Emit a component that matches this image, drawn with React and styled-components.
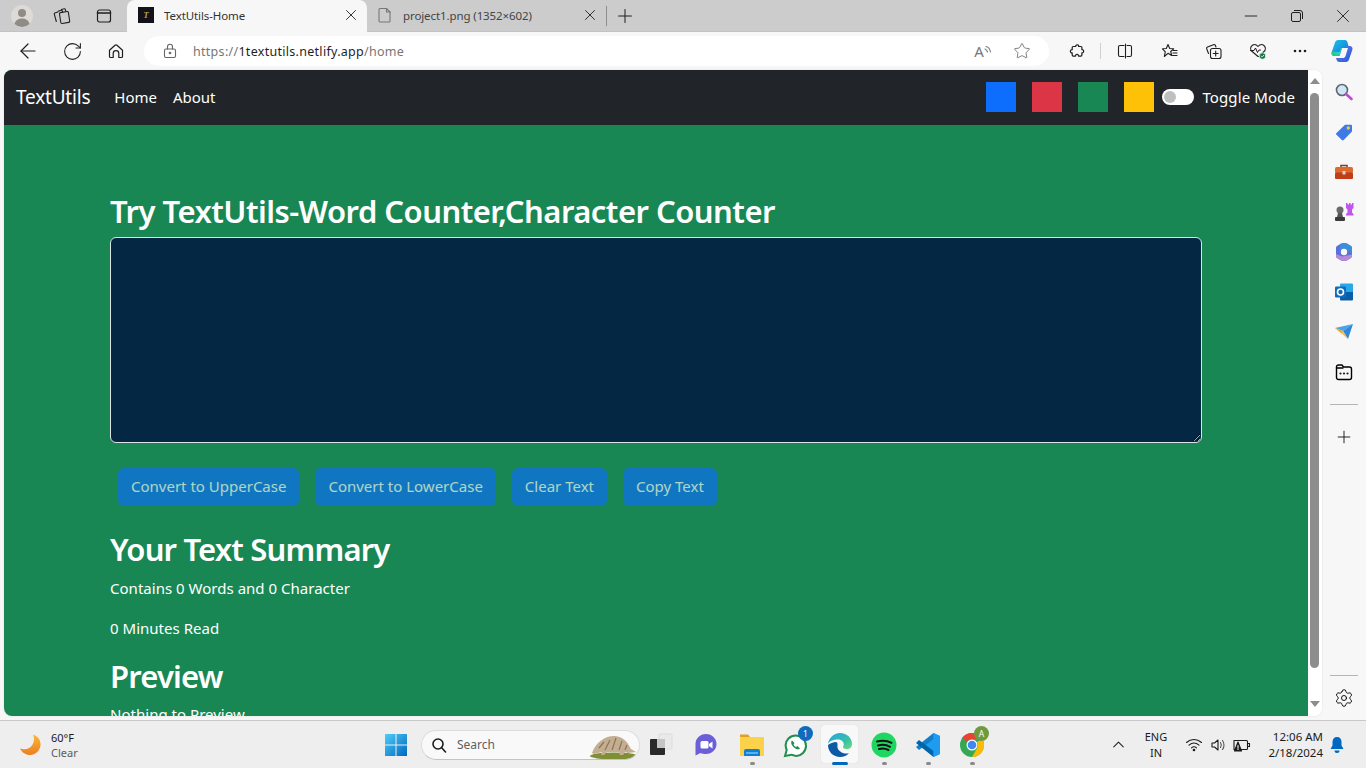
import React from "react";
import styled, { createGlobalStyle } from "styled-components";
import { ArrowLeft, RotateCw, Star, X, Plus, Minus, Settings, ChevronUp } from "lucide-react";

const uiFont = `"Noto Sans", "Open Sans", sans-serif`;

const Global = createGlobalStyle`
  html, body { margin: 0; padding: 0; height: 768px; overflow: hidden; background: #f7f7f7; }
  * { box-sizing: border-box; }
  #root { width: 1366px; height: 768px; overflow: hidden; font-family: ${uiFont}; }
`;

const Screen = styled.div`display: flex; flex-direction: column; width: 1366px; height: 768px; background: #f7f7f7;`;
const TitleBar = styled.div`display: flex; align-items: stretch; height: 32px; background: #cccccc; flex: none; box-shadow: inset 0 -1px 0 #c2c2c2;`;
const Slot = styled.div`
  display: flex; align-items: center; justify-content: center; flex: none; position: relative;
  width: ${p => p.$w}px; color: ${p => p.$c || "#1f1f1f"};
`;
const Tab = styled.div`
  display: flex; align-items: center; flex: none; width: ${p => p.$w}px; padding: 0 7px 2px ${p => p.$active ? 11 : 10}px;
  margin-left: ${p => p.$ml || 0}px;
  background: ${p => p.$active ? "#f7f7f7" : "transparent"};
  border-radius: 8px 8px 0 0;
  color: #333; font-size: 11.5px; gap: ${p => p.$active ? 10 : 11}px;
`;
const TabTitle = styled.span`flex: 1; white-space: nowrap; overflow: hidden; letter-spacing: -.1px; color: ${p => p.$c || "#333"};`;
const Favicon = styled.span`
  width: 16px; height: 16px; background: #12121a; color: #b99a4a; font: italic bold 9px/16px "Liberation Serif", serif;
  text-align: center; flex: none;
`;
const TabDivider = styled.div`width: 1px; height: 20px; background: #8e8e8e; align-self: center; flex: none;`;
const Spacer = styled.div`flex: 1;`;

const ToolBar = styled.div`display: flex; align-items: center; height: 38px; flex: none; padding-left: 6px;`;
const UrlBar = styled.div`
  display: flex; align-items: center; width: 905px; height: 30px; margin: 0 6px; padding-left: 19px;
  background: #fff; border-radius: 15px; flex: none;
`;
const UrlText = styled.div`font-size: 12.5px; letter-spacing: .29px; color: #767676; margin-left: 16px; flex: 1; white-space: nowrap;`;
const UrlHost = styled.span`color: #1f1f1f;`;
const ToolDivider = styled.div`width: 1px; height: 16px; background: #cfcfcf; margin: 0 1px; flex: none;`;
const ReadA = styled.span`font: 15px "Noto Sans", sans-serif; color: #777; line-height: 1;`;

const MainRow = styled.div`display: flex; height: 650px; flex: none;`;
const PageFrame = styled.div`
  display: flex; width: 1318px; height: 646px; margin-left: 4px; flex: none; overflow: hidden;
  border-radius: 8px; background: #fff; box-shadow: 0 0 2px rgba(0,0,0,.12);
`;
const Viewport = styled.div`width: 1304px; height: 646px; overflow: hidden; background: #198754; color: #fff; flex: none;`;

const ScrollBar = styled.div`
  width: 14px; flex: none; background: #fff; display: flex; flex-direction: column; align-items: flex-start; padding: 8px 0 0 2px;
`;
const ArrowUp = styled.div`width: 0; height: 0; margin-left: 0; border-left: 5px solid transparent; border-right: 5px solid transparent; border-bottom: 6px solid #8d8d8d;`;
const ArrowDown = styled.div`width: 0; height: 0; border-left: 5px solid transparent; border-right: 5px solid transparent; border-top: 6px solid #8d8d8d; margin-top: 33px;`;
const Thumb = styled.div`width: 9px; height: 575px; margin-top: 9px; background: #8d8d8d; border-radius: 5px;`;

const Nav = styled.nav`display: flex; align-items: center; height: 55px; background: #212529; padding: 0 13px 1px 12px;`;
const Brand = styled.span`font-size: 19px; letter-spacing: -.2px; margin-right: 24px;`;
const NavLink = styled.span`font-size: 15px; margin-right: 16px; letter-spacing: -.02px; padding-bottom: 1px;`;
const Swatch = styled.span`width: 30px; height: 30px; background: ${p => p.$c}; margin-right: ${p => p.$mr}px; flex: none;`;
const Toggle = styled.span`
  width: 32px; height: 16px; border-radius: 8px; background: #fff; margin-right: 8px; display: flex; align-items: center; padding-left: 2px; flex: none;
`;
const Knob = styled.span`width: 12px; height: 12px; border-radius: 50%; background: #bfbfbf;`;
const ToggleLabel = styled.span`font-size: 15px; letter-spacing: .1px; padding-bottom: 1px;`;

const Content = styled.main`padding: 66px 0 0 106px;`;
const H1 = styled.h1`margin: 0 0 6px; font-size: 31px; font-weight: 600; line-height: 40px; letter-spacing: -.53px;`;
const TextArea = styled.textarea`
  display: block; width: 1092px; height: 206px; background: #042743; border: 1px solid #dee2e6; border-radius: 6px; outline: none; color: #fff;
`;
const Buttons = styled.div`display: flex; gap: 16px; margin: 25px 0 0 8px;`;
const Btn = styled.button`
  height: 38px; padding: 0 12px 2px; border: 1px solid #0d6efd; border-radius: 6px; background: #0d6efd; color: #fff; opacity: .65;
  font: 15px ${uiFont}; letter-spacing: 0; white-space: nowrap;
`;
const H2 = styled.h2`margin: ${p => p.$mt}px 0 0; font-size: 31px; font-weight: 600; line-height: 40px; letter-spacing: -.82px;`;
const Para = styled.p`margin: ${p => p.$mt}px 0 0; font-size: 15px; line-height: 24px; letter-spacing: .02px;`;

const SideBar = styled.aside`width: 44px; height: 650px; display: flex; flex-direction: column; align-items: center; flex: none; padding: 2px 0;`;
const SideIcon = styled.div`width: 44px; height: 40px; display: flex; align-items: center; justify-content: center; flex: none;`;
const SideRule = styled.div`width: 28px; height: 1px; background: #b5b5b5; flex: none; margin: ${p => p.$m};`;

const TaskBar = styled.footer`display: flex; align-items: center; height: 48px; flex: none; background: #eeeeee; border-top: 1px solid #c9c9c9; padding-left: 18px;`;
const Weather = styled.div`display: flex; align-items: center; width: 366px; flex: none; gap: 9px;`;
const WeatherText = styled.div`font-size: 11px; line-height: 15px; color: #1a1a1a;`;
const Muted = styled.div`color: #5c5c5c;`;
const SearchPill = styled.div`
  display: flex; align-items: center; width: 219px; height: 30px; margin-left: 13px; border-radius: 15px; background: #f9f9f9;
  border: 1px solid #dcdcdc; border-bottom-color: #c4c4c4; padding-left: 9px; gap: 10px; flex: none; position: relative; overflow: hidden;
`;
const SearchText = styled.span`font-size: 12px; color: #5d5d5d; flex: 1;`;
const ActiveBg = styled.div`
  position: absolute; left: 3px; top: 4px; width: 37px; height: 38px; background: #f8f8f8; border-radius: 4px; box-shadow: 0 0 1px rgba(0,0,0,.15);
`;
const Dot = styled.span`position: absolute; left: 50%; bottom: 3px; width: ${p => p.$wide ? 16 : 5}px; height: 3px; margin-left: ${p => p.$wide ? -8 : -2}px; border-radius: 2px; background: ${p => p.$wide ? "#0067c0" : "#8a8a8a"};`;
const Badge = styled.span`
  position: absolute; top: 5px; right: ${p => p.$r}px; width: 15px; height: 15px; border-radius: 50%; background: ${p => p.$c}; color: #fff;
  font-size: 8.5px; line-height: 15px; text-align: center;
`;
const TaskSlot = styled(Slot)`height: 47px;`;
const TrayText = styled.div`font-size: 11px; line-height: 16px; text-align: center; color: #1a1a1a; width: 40px; flex: none; margin: 0 3px 0 6px;`;
const Clock = styled.div`font-size: 11.5px; line-height: 16px; text-align: right; color: #1a1a1a; width: 62px; flex: none; margin-left: 6px; white-space: nowrap;`;
const Tray = styled.div`display: flex; align-items: center; margin-left: auto; padding-right: 15px;`;

const S = ({ w = 16, h = 16, vb, children, ...r }) => <svg width={w} height={h} viewBox={vb || `0 0 ${w} ${h}`} fill="none" stroke="currentColor" strokeWidth="1.1" strokeLinecap="round" strokeLinejoin="round" {...r}>{children}</svg>;

const Avatar = () => <S w={22} h={22}><circle cx="11" cy="11" r="11" fill="#dedbd6" stroke="none"/><circle cx="11" cy="8" r="4" fill="#8f8b86" stroke="none"/><path d="M3.500 19c1-4 4-5.500 7.500-5.500s6.500 1.500 7.500 5.500a11 11 0 0 1-15 0z" fill="#8f8b86" stroke="none"/></S>;
const CollectionsIcon = () => <S w={18} h={18}><path d="M8.500 2.500 11 1.800c.6-.2 1 0 1.200.5l.5 1.400M5.200 4.200 8 3.300c.6-.2 1 0 1.200.5l.4 1.200M3.300 14.500 1.300 7.200c-.2-.6 0-1 .5-1.200L4.700 5"/><path d="M6.500 7c-.1-.8.300-1.300 1-1.400l6.500-1.100c.8-.1 1.300.3 1.400 1l1.300 8.500c.1.8-.3 1.300-1 1.400l-6.500 1.100c-.8.1-1.300-.3-1.400-1z"/></S>;
const VerticalTabs = () => <S w={16} h={16}><rect x="1.500" y="2" width="13" height="12" rx="2" strokeWidth="1.200"/><path d="M1.500 5h13" strokeWidth="1.600"/></S>;
const FileIcon = () => <S w={14} h={16} stroke="#777"><path d="M2 1.500h6.500l3.500 3.500v9a1 1 0 0 1-1 1H2a1 1 0 0 1-1-1V2.500a1 1 0 0 1 1-1z"/><path d="M8.500 1.500V5H12"/></S>;
const HomeGlyph = () => <S w={16} h={16} strokeWidth="1.200"><path d="M1.500 7.300 7 2.200c.6-.5 1.400-.5 2 0l5.500 5.100v6.200c0 .6-.4 1-1 1h-2.700V10.500a2.800 2.800 0 0 0-5.600 0v4H2.500c-.6 0-1-.4-1-1z"/></S>;
const LockIcon = () => <S w={14} h={16} stroke="#666"><rect x="1.500" y="6" width="11" height="8.500" rx="1.500"/><path d="M4.500 6V3.800a2.500 2.500 0 0 1 5 0V6"/><circle cx="7" cy="10" r=".8" fill="#666"/></S>;
const Arcs = () => <S w={8} h={12} stroke="#777"><path d="M1 4c1.500 .5 2 1.500 2.500 3M2 1.500c2.500 .5 4 3 4.500 5.500"/></S>;
const PuzzleIcon = () => <S w={16} h={16} strokeWidth="1.200"><path d="M5.500 3.500h1.200c-.3-2 3-2.500 3-.2 0 .1 0 .2-.1.200h2.400c.5 0 .9.400.9.900v2.200c2-.3 2.600 3.200.1 3.200l-.1 0v2.300c0 .6-.4 1-1 1H9.500c.3-2-3-2.500-3-.2 0 .1 0 .2 0 .2H4.200c-.5 0-1-.5-1-1v-2.200c-2.200.3-2.600-3.300 0-3.200V4.500c0-.6.500-1 1-1z"/></S>;
const SplitIcon = () => <S w={16} h={16}><path d="M7 2.500H3a1.500 1.500 0 0 0-1.500 1.500v8A1.500 1.500 0 0 0 3 13.500h4M10 2.500h3A1.500 1.500 0 0 1 14.500 4v8a1.500 1.500 0 0 1-1.500 1.500h-3M8.500 1v14"/></S>;
const FavIcon = () => <S w={18} h={16}><path d="M7 1.500 8.700 5.500l4 .3-3 2.700 1 4-3.700-2.200-3.700 3.200 1-4.700L1.500 5.800l3.800-.3z"/><path d="M12 7.500h4M12 10h4M11.500 12.500h4.500" strokeWidth="1.200"/></S>;
const CollectPlus = () => <S w={18} h={18}><path d="M3.500 11.500 1.700 6.800c-.3-.8 0-1.500.8-1.800l6-2.300c.8-.3 1.500 0 1.800.6l.7 1.700"/><rect x="5.500" y="6.500" width="10.500" height="10" rx="2" fill="#f7f7f7"/><path d="M10.700 9v5M8.200 11.500h5"/></S>;
const HealthIcon = () => <S w={18} h={18}><path d="M2 8.500C.5 5.500 3 2.500 5.500 2.500c1.500 0 2.500.8 3.500 2 1-1.200 2-2 3.500-2 2.500 0 5 3 3.500 6L10 14.500H9z"/><path d="M1.500 8.500h3.500l1.500-2.500 2 4.500 1.500-2.500h1.500" strokeWidth="1"/><circle cx="13.500" cy="14" r="3.300" fill="#107c41" stroke="#f7f7f7" strokeWidth=".8"/><path d="M12.200 14l1 1 1.500-1.700" stroke="#fff" strokeWidth=".8"/></S>;
const DotsIcon = () => <S w={14} h={4}><g fill="#1f1f1f" stroke="none"><circle cx="2" cy="2" r="1.300"/><circle cx="7" cy="2" r="1.300"/><circle cx="12" cy="2" r="1.300"/></g></S>;
const Copilot = () => (
  <svg width="24" height="24" viewBox="0 0 24 24">
    <defs>
      <linearGradient id="cpa" x1="0" y1="0" x2="1" y2="1"><stop offset="0" stopColor="#1cc7e8"/><stop offset="1" stopColor="#0f6fdc"/></linearGradient>
      <linearGradient id="cpb" x1="0" y1="1" x2="1" y2="0"><stop offset="0" stopColor="#22c55e"/><stop offset="1" stopColor="#35d0e0"/></linearGradient>
      <linearGradient id="cpc" x1="0" y1="0" x2="1" y2="1"><stop offset="0" stopColor="#6d7cf0"/><stop offset="1" stopColor="#1f5bd8"/></linearGradient>
    </defs>
    <path d="M8 1h7c1.500 0 2 1 2.500 2.500L19 9h-7L9.500 17H4.500C2 17 1 15 1.700 13L5 3.500C5.500 2 6.500 1 8 1z" fill="url(#cpa)"/>
    <path d="M5 17h4.500L12 9h-1L8 17z" fill="url(#cpb)"/>
    <path d="M1.700 13C1 15 2 17 4.500 17H9l1.500-4H5z" fill="url(#cpb)"/>
    <path d="M16 7h3.500C22 7 23 9 22.300 11L19 20.500C18.500 22 17.500 23 16 23H9c-1.500 0-2-1-2.500-2.500L6 19h7c1 0 2-.5 2.500-2L18 9z" fill="url(#cpc)"/>
  </svg>
);

const SearchGlass = () => <svg width="18" height="18" viewBox="0 0 18 18"><circle cx="7" cy="7" r="5.500" fill="#cfe6f5" stroke="#5f6670" strokeWidth="1.600"/><path d="M11 11l5.500 5" stroke="#c04ad8" strokeWidth="2.600" strokeLinecap="round"/></svg>;
const TagIcon = () => <svg width="18" height="18" viewBox="0 0 18 18"><path d="M1.500 10 9.500 2.200c.4-.4.800-.5 1.300-.5h5c.7 0 1.200.5 1.200 1.200v5c0 .5-.2.900-.5 1.200L8.700 17c-.6.500-1.300.5-1.800 0l-5.400-5.200c-.6-.5-.6-1.300 0-1.800z" fill="#3f79e8"/><circle cx="13.300" cy="5" r="1.700" fill="#f5c842"/></svg>;
const ToolboxIcon = () => <svg width="20" height="18" viewBox="0 0 20 18"><path d="M7 4V2.500h6V4" fill="none" stroke="#8c3a1a" strokeWidth="1.500"/><rect x="1" y="4" width="18" height="6" rx="1.500" fill="#dd6b2e"/><rect x="1" y="9.500" width="18" height="6.500" rx="1" fill="#bf3e17"/><rect x="8.500" y="8" width="3" height="3.500" rx=".5" fill="#d5d5d5"/></svg>;
const ChessIcon = () => <svg width="20" height="20" viewBox="0 0 20 20"><path d="M12 1h1.500v1.500H15V1h1.500v1.500H18V1h1.500v5L18 7.500v3l1.500 1.500v1.500H12V12l1.500-1.500v-3L12 6z" fill="#c153ee"/><circle cx="6" cy="8" r="3.500" fill="#6a6a6a"/><path d="M4 11h4l1 4H3z" fill="#555"/><rect x="1" y="15" width="10" height="4" rx="1" fill="#3a3a3a"/></svg>;
const M365Icon = () => <svg width="20" height="20" viewBox="0 0 20 20"><path d="M10 1c2 0 3 .5 4.500 1.500L17 4c.8.500 1 1.200 1 2v8c0 .8-.5 1.500-1 2l-2.500 1.500c-1.500 1-3 1.500-4.500 1.500s-3-.5-4.500-1.500L3 16c-.8-.5-1-1.200-1-2V6c0-.8.200-1.500 1-2l2.500-1.500C7 1.500 8 1 10 1z" fill="#5a6fd8"/><path d="M10 1c2 0 3 .5 4.500 1.500L17 4c.8.500 1 1.200 1 2v5L12 7.500 5 8 7 2c1-.7 2-1 3-1z" fill="#3a8fd8"/><path d="M2 12l6 2.500 10-2v1.500c0 .8-.5 1.500-1 2l-2.500 1.500c-1.500 1-3 1.500-4.500 1.500s-3-.5-4.500-1.500L3 16c-.8-.5-1-1.200-1-2z" fill="#b58ad8"/><circle cx="10" cy="10" r="3.200" fill="#f7f7f7"/></svg>;
const OutlookIcon = () => <svg width="20" height="20" viewBox="0 0 20 20"><rect x="6" y="1.500" width="13" height="16" rx="1" fill="#28a8ea"/><path d="M6 10h13v7.500a1 1 0 0 1-1 1H7a1 1 0 0 1-1-1z" fill="#0a5ea8"/><rect x="1" y="4.500" width="11" height="11" rx="1" fill="#0f6cbd"/><circle cx="6.500" cy="10" r="3" fill="none" stroke="#fff" strokeWidth="1.600"/></svg>;
const SendIcon = () => <svg width="20" height="18" viewBox="0 0 20 18"><path d="M1 5 19 1 9 8z" fill="#4aa3e8"/><path d="M1 5l8 3-1 3z" fill="#f0a52e"/><path d="M9 8 19 1 14 16z" fill="#2f86dc"/><path d="M9 8l-1 3 6 5z" fill="#f4b942" opacity=".9"/></svg>;
const DropIcon = () => <S w={18} h={18} strokeWidth="1.400"><path d="M1.500 4a2 2 0 0 1 2-2h3.500l1.500 2H14.500A2 2 0 0 1 16.500 6v8.500a2 2 0 0 1-2 2h-11a2 2 0 0 1-2-2z"/><path d="M1.500 5h6.500"/><g fill="#1f1f1f" stroke="none"><circle cx="5.500" cy="10.500" r="1.100"/><circle cx="9" cy="10.500" r="1.100"/><circle cx="12.500" cy="10.500" r="1.100"/></g></S>;

const Moon = () => <svg width="24" height="24" viewBox="0 0 24 24"><defs><linearGradient id="mn" x1="0" y1="0" x2="0" y2="1"><stop offset="0" stopColor="#f8b93a"/><stop offset="1" stopColor="#ee7d1f"/></linearGradient></defs><path d="M15 1.500c6 2 8 7 7.500 11-.6 5-5 9.500-10.500 9.500-4 0-8-2.300-10-6.500 5 1.500 9.500.5 12-3 2.500-3.500 2.500-7.500 1-11z" fill="url(#mn)"/></svg>;
const WinLogo = () => <svg width="24" height="24" viewBox="0 0 24 24"><defs><linearGradient id="wl" x1="0" y1="0" x2="1" y2="1"><stop offset="0" stopColor="#4fcdf8"/><stop offset="1" stopColor="#0067c0"/></linearGradient></defs><path d="M1 1h10.500v10.500H1zM12.500 1H23v10.500H12.500zM1 12.500h10.500V23H1zM12.500 12.500H23V23H12.500z" fill="url(#wl)"/></svg>;
const MagnifyIcon = () => <S w={16} h={16} stroke="#1c1c1c" strokeWidth="1.600"><circle cx="7" cy="7" r="5"/><path d="M10.700 10.700 14.500 15"/></S>;
const Pangolin = () => <svg width="50" height="30" viewBox="0 0 50 30"><ellipse cx="25" cy="26" rx="24" ry="3.500" fill="#7f8f35"/><path d="M3 23C7 12 16 6 25 6c8 0 13 5 17 13l5 3-8 1-3-1-2 3h-3l-1-3H18l-3 3h-3l1-3-8 2z" fill="#c4ae92"/><path d="M10 18l5-6M16 20l5-10M23 20l4-12M30 20l3-9M36 20l2-5" stroke="#8a7559" strokeWidth="1.200"/></svg>;
const TaskView = () => <svg width="24" height="24" viewBox="0 0 24 24"><rect x="10" y="1" width="13" height="15" rx="1" fill="#e9e9e9" stroke="#dcdcdc"/><rect x="1" y="6" width="15" height="16" rx="1" fill="#2a2a2a"/><rect x="8" y="6" width="8" height="9" fill="#c4c4c4"/></svg>;
const MeetIcon = () => <svg width="24" height="24" viewBox="0 0 24 24"><path d="M12 1C6 1 1.500 5.500 1.500 11v11.500l5-2.500c1.500 .7 3.500 1 5.500 1 6 0 10.500-4.500 10.500-10S18 1 12 1z" fill="#6a5fd8"/><rect x="6.500" y="8" width="8" height="7.500" rx="1.500" fill="#fff"/><path d="M15 11l3.500-2.500v7L15 13z" fill="#fff"/></svg>;
const FolderIcon = () => <svg width="26" height="26" viewBox="0 0 26 26"><path d="M1 2.500h8l2 2.500H1z" fill="#e0a020"/><rect x="1" y="5" width="24" height="19" rx="1" fill="#fbd249"/><path d="M5 24v-5a2 2 0 0 1 2-2h12a2 2 0 0 1 2 2v5z" fill="#0f7fd4"/><rect x="7" y="20" width="12" height="2" fill="#50b4f0"/></svg>;
const WhatsApp = () => <svg width="26" height="26" viewBox="0 0 26 26"><path d="M2 24l1.700-6C2 14 2.500 9.500 5.500 6.500c4-4 10.500-4 14.500 0s4 10.500 0 14.500c-3 3-7.500 3.600-11.500 1.700z" fill="#fff" stroke="#1f8f4e" strokeWidth="2"/><path d="M9 8.500c-1.500 1.500-1 4 1.500 6.500s5 3 6.500 1.500l-2.500-2.500-1.500 1c-1.200-.5-2-1.400-2.500-2.500l1-1.500z" fill="#1f8f4e"/></svg>;
const EdgeIcon = () => <svg width="26" height="26" viewBox="0 0 26 26"><defs><linearGradient id="eg" x1="0" y1="0" x2="1" y2="1"><stop offset="0" stopColor="#2aa0e8"/><stop offset=".6" stopColor="#35c1a8"/><stop offset="1" stopColor="#6fdc7a"/></linearGradient></defs><path d="M1 13C1 6 7 1 13 1c7 0 12 5 12 11 0 3-2 5-5 5-2.500 0-4-1-4-2 0-.8.800-1 .8-2.500 0-2.800-2.500-5-5.800-5C7 7.500 1 9 1 13z" fill="url(#eg)"/><path d="M1 13c0 7 5.500 12 12 12 4 0 7-1.500 9-4-3 1-6 .5-8-1-3-2-4-4-3.500-7 .3-2-.5-5.500-9.500 0z" fill="#0c5aa6"/></svg>;
const Spotify = () => <svg width="26" height="26" viewBox="0 0 26 26"><circle cx="13" cy="13" r="12.500" fill="#1ed760"/><path d="M6 9.500c5-1.300 10-1 14.500 1.300M7 13.500c4-1 8.500-.8 12 1.300M8 17c3.300-.8 6.500-.6 9.500 1" stroke="#111" strokeWidth="2" strokeLinecap="round" fill="none"/></svg>;
const VSCode = () => <svg width="26" height="26" viewBox="0 0 26 26"><path d="M18.500 1 25 4v18l-6.500 3L8 14.500z" fill="#1f9cf0"/><path d="M18.500 1 1 15l3 3 14.500-11z" fill="#0f7fcc"/><path d="M18.500 25 1 11l3-3 14.500 11z" fill="#0065a9"/><path d="M18.500 1 25 4v18l-6.500 3z" fill="#1f9cf0"/></svg>;
const Chrome = () => <svg width="26" height="26" viewBox="0 0 26 26"><circle cx="13" cy="13" r="12" fill="#34a853"/><path d="M13 1a12 12 0 0 1 10.400 6H13a6 6 0 0 0-5.200 3L3.200 5.800A12 12 0 0 1 13 1z" fill="#ea4335"/><path d="M23.400 7A12 12 0 0 1 13 25l5.200-9A6 6 0 0 0 18 10z" fill="#fbbc05"/><circle cx="13" cy="13" r="5.500" fill="#fff"/><circle cx="13" cy="13" r="4.300" fill="#4285f4"/></svg>;
const Wifi = () => <S w={18} h={16} stroke="#1a1a1a"><path d="M1.500 5.500c4.500-4 10.500-4 15 0M4 8.200c3-2.700 7-2.700 10 0M6.500 10.800c1.500-1.300 3.500-1.300 5 0"/><circle cx="9" cy="13" r=".8" fill="#1a1a1a"/></S>;
const Volume = () => <S w={18} h={16} stroke="#1a1a1a"><path d="M2 6v4h2.500L8 13V3L4.500 6z"/><path d="M10.500 5.500c1 1.500 1 3.500 0 5M12.500 3.500c2 2.500 2 6.500 0 9" stroke="#555"/></S>;
const Battery = () => <S w={20} h={16} stroke="#1a1a1a"><path d="M2 3.500h12.500a1 1 0 0 1 1 1v7a1 1 0 0 1-1 1H2z"/><path d="M16 6.500h1.500v3H16"/><path d="M6 5 2.500 14h7z" fill="#1a1a1a"/><path d="M6 8.500v2.500M6 12v.5" stroke="#fff"/></S>;
const Bell = () => <svg width="16" height="18" viewBox="0 0 16 18"><path d="M8 1c-3 0-4.500 2-4.500 5v3.500L1.500 13h13l-2-3.500V6c0-3-1.500-5-4.500-5z" fill="#0067c0"/><path d="M5.500 14.500h5a2.500 2.500 0 0 1-5 0z" fill="#0067c0"/></svg>;

const sideIcons = [SearchGlass, TagIcon, ToolboxIcon, ChessIcon, M365Icon, OutlookIcon, SendIcon, DropIcon];
const swatches = [["#0d6efd", 16], ["#dc3545", 16], ["#198754", 16], ["#ffc107", 8]];
const actions = ["Convert to UpperCase", "Convert to LowerCase", "Clear Text", "Copy Text"];

export default function App() {
  return (
    <Screen>
      <Global />
      <TitleBar>
        <Slot $w={44}><Avatar /></Slot>
        <Slot $w={36}><CollectionsIcon /></Slot>
        <Slot $w={47}><VerticalTabs /></Slot>
        <Tab $w={240} $active>
          <Favicon>T</Favicon>
          <TabTitle>TextUtils-Home</TabTitle>
          <X size={18} strokeWidth={1.2} color="#1f1f1f" />
        </Tab>
        <Tab $w={238} $ml={1}>
          <FileIcon />
          <TabTitle $c="#444">project1.png (1352×602)</TabTitle>
          <X size={18} strokeWidth={1.2} color="#1f1f1f" />
        </Tab>
        <TabDivider />
        <Slot $w={36}><Plus size={22} strokeWidth={1.1} /></Slot>
        <Spacer />
        <Slot $w={46}><Minus size={20} strokeWidth={1.1} /></Slot>
        <Slot $w={46}><svg width="12" height="12" viewBox="0 0 12 12" fill="none" stroke="#1f1f1f"><rect x=".5" y="2.500" width="9" height="9" rx="1.500"/><path d="M3 .5h6a2.500 2.500 0 0 1 2.500 2.500v6"/></svg></Slot>
        <Slot $w={46}><X size={22} strokeWidth={1} /></Slot>
      </TitleBar>
      <ToolBar>
        <Slot $w={44}><ArrowLeft size={24} strokeWidth={1.2} /></Slot>
        <Slot $w={44}><RotateCw size={21} strokeWidth={1.2} /></Slot>
        <Slot $w={44}><HomeGlyph /></Slot>
        <UrlBar>
          <LockIcon />
          <UrlText>https://<UrlHost>1textutils.netlify.app</UrlHost>/home</UrlText>
          <Slot $w={24}><ReadA>A</ReadA><Arcs /></Slot>
          <Slot $w={54}><Star size={18} strokeWidth={1.1} color="#666" /></Slot>
        </UrlBar>
        <Slot $w={44}><PuzzleIcon /></Slot>
        <ToolDivider />
        <Slot $w={46}><SplitIcon /></Slot>
        <Slot $w={44}><FavIcon /></Slot>
        <Slot $w={44}><CollectPlus /></Slot>
        <Slot $w={44}><HealthIcon /></Slot>
        <Slot $w={40}><DotsIcon /></Slot>
        <Slot $w={44}><Copilot /></Slot>
      </ToolBar>
      <MainRow>
        <PageFrame>
          <Viewport>
            <Nav>
              <Brand>TextUtils</Brand>
              <NavLink>Home</NavLink>
              <NavLink>About</NavLink>
              <Spacer />
              {swatches.map(([c, mr]) => <Swatch key={c} $c={c} $mr={mr} />)}
              <Toggle><Knob /></Toggle>
              <ToggleLabel>Toggle Mode</ToggleLabel>
            </Nav>
            <Content>
              <H1>Try TextUtils-Word Counter,Character Counter</H1>
              <TextArea />
              <Buttons>
                {actions.map(a => <Btn key={a} disabled>{a}</Btn>)}
              </Buttons>
              <H2 $mt={23}>Your Text Summary</H2>
              <Para $mt={7}>Contains 0 Words and 0 Character</Para>
              <Para $mt={16}>0 Minutes Read</Para>
              <H2 $mt={16}>Preview</H2>
              <Para $mt={6}>Nothing to Preview</Para>
            </Content>
          </Viewport>
          <ScrollBar>
            <ArrowUp />
            <Thumb />
            <ArrowDown />
          </ScrollBar>
        </PageFrame>
        <SideBar>
          {sideIcons.map((I, i) => <SideIcon key={i}><I /></SideIcon>)}
          <SideRule $m="12px 0 12px" />
          <SideIcon><Plus size={20} strokeWidth={1} /></SideIcon>
          <Spacer />
          <SideRule $m="0 0 2px" />
          <SideIcon><Settings size={20} strokeWidth={1.1} /></SideIcon>
        </SideBar>
      </MainRow>
      <TaskBar>
        <Weather>
          <Moon />
          <WeatherText>60°F<Muted>Clear</Muted></WeatherText>
        </Weather>
        <Slot $w={24}><WinLogo /></Slot>
        <SearchPill>
          <MagnifyIcon />
          <SearchText>Search</SearchText>
          <Pangolin />
        </SearchPill>
        <TaskSlot $w={42}><TaskView /></TaskSlot>
        <TaskSlot $w={48}><MeetIcon /></TaskSlot>
        <TaskSlot $w={44}><FolderIcon /><Dot /></TaskSlot>
        <TaskSlot $w={44}><WhatsApp /><Badge $c="#0f6cbd" $r={5}>1</Badge></TaskSlot>
        <TaskSlot $w={44}><ActiveBg /><Slot $w={26}><EdgeIcon /></Slot><Dot $wide /></TaskSlot>
        <TaskSlot $w={44}><Spotify /><Dot /></TaskSlot>
        <TaskSlot $w={44}><VSCode /><Dot /></TaskSlot>
        <TaskSlot $w={44}><Chrome /><Dot /><Badge $c="#6f9b3c" $r={5}>A</Badge></TaskSlot>
        <Tray>
          <Slot $w={24}><ChevronUp size={19} strokeWidth={1.3} /></Slot>
          <TrayText>ENG<br />IN</TrayText>
          <Slot $w={30}><Wifi /></Slot>
          <Slot $w={20}><Volume /></Slot>
          <Slot $w={26}><Battery /></Slot>
          <Clock>12:06 AM<br />2/18/2024</Clock>
          <Slot $w={28}><Bell /></Slot>
        </Tray>
      </TaskBar>
    </Screen>
  );
}
